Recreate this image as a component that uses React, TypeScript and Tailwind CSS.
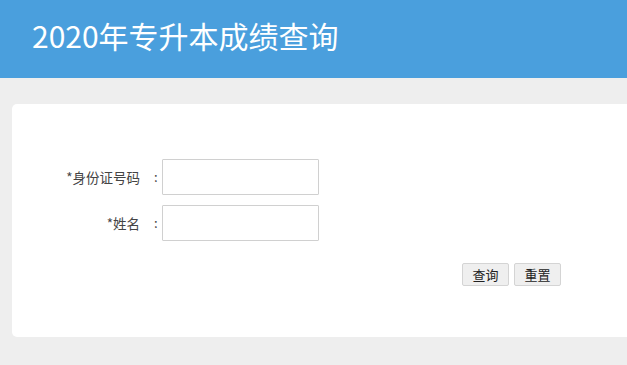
import React from "react";

const font = { fontFamily: '"Noto Sans CJK SC", "Noto Sans", sans-serif' };

export default function App() {
  return (
    <div className="w-[627px] h-[365px] overflow-hidden bg-[#eeeeee]" style={font}>
      <div className="h-[78px] bg-[#4a9fdd] pl-[32px] pt-[14px]">
        <h1 className="text-[30px] leading-[42px] text-white font-normal">2020年专升本成绩查询</h1>
      </div>
      <div className="mt-[26px] ml-[12px] w-[640px] h-[233px] bg-white rounded-[5px] pt-[55px]">
        <div className="flex items-center h-[36px]">
          <div className="w-[128px] text-right text-[13.5px] text-[#444]">*身份证号码</div>
          <div className="w-[22px] pl-[14px] text-[13px] text-[#444]">:</div>
          <input className="w-[157px] h-[36px] border border-[#d0d0d0] rounded-[1px] outline-none" />
        </div>
        <div className="flex items-center h-[36px] mt-[10px]">
          <div className="w-[128px] text-right text-[13.5px] text-[#444]">*姓名</div>
          <div className="w-[22px] pl-[14px] text-[13px] text-[#444]">:</div>
          <input className="w-[157px] h-[36px] border border-[#d0d0d0] rounded-[1px] outline-none" />
        </div>
        <div className="flex gap-[5px] mt-[22px] ml-[450px]">
          <button className="w-[47px] h-[23px] bg-[#efefef] border border-[#d4d4d4] rounded-[2px] text-[13px] leading-[21px] text-[#222]">查询</button>
          <button className="w-[47px] h-[23px] bg-[#efefef] border border-[#d4d4d4] rounded-[2px] text-[13px] leading-[21px] text-[#222]">重置</button>
        </div>
      </div>
    </div>
  );
}
